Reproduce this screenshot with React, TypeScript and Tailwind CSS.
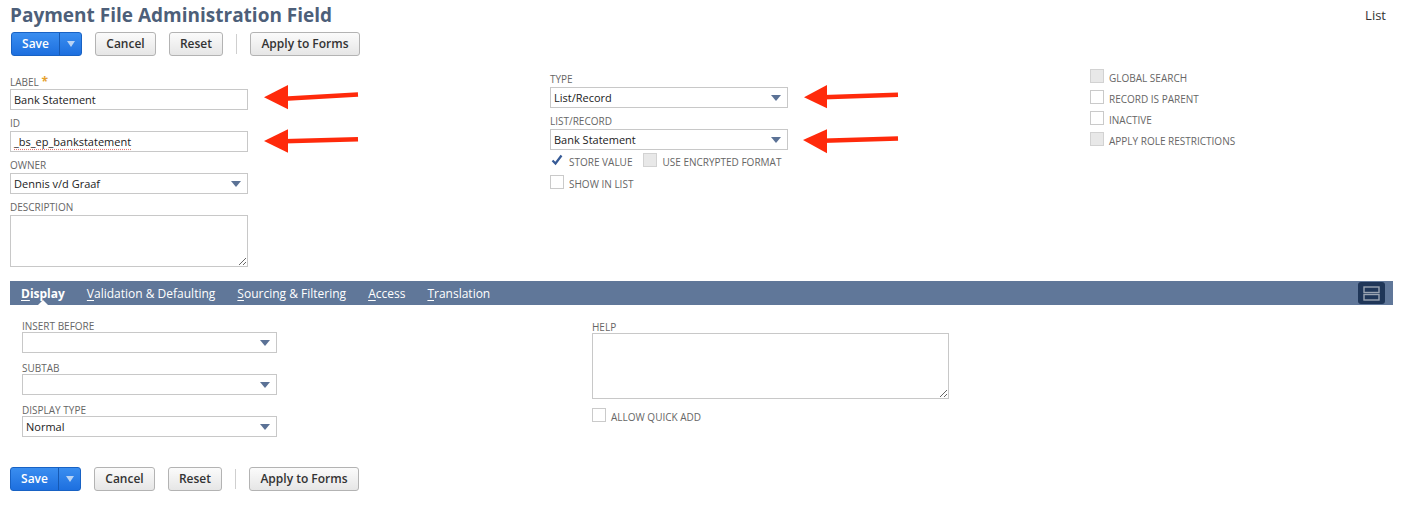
import React from "react";

function GrayButton({ children, w }: { children: React.ReactNode; w: string }) {
  return (
    <div
      className={`flex h-[24px] ${w} items-center justify-center rounded-[3px] border border-[#b3b3b3] bg-linear-to-b from-[#fbfbfb] to-[#e6e6e6] text-[12px] font-semibold text-[#333]`}
    >
      {children}
    </div>
  );
}

function SaveButton() {
  return (
    <div className="flex h-[24px] w-[71px] rounded-[3px] border border-[#1862c4] bg-linear-to-b from-[#3a8ef0] to-[#1d6fdf] text-white">
      <div className="flex w-[47px] items-center justify-center text-[12px] font-semibold">Save</div>
      <div className="w-px bg-[#1659b3]" />
      <div className="flex flex-1 items-center justify-center">
        <svg width="8" height="6" viewBox="0 0 8 6">
          <path d="M0 0H8L4 6Z" fill="#b9d3f4" />
        </svg>
      </div>
    </div>
  );
}

function ButtonBar({ className }: { className: string }) {
  return (
    <div className={`flex items-center gap-[13px] ${className}`}>
      <SaveButton />
      <GrayButton w="w-[61px]">Cancel</GrayButton>
      <GrayButton w="w-[54px]">Reset</GrayButton>
      <div className="h-[20px] w-px bg-[#cfcfcf]" />
      <GrayButton w="w-[110px]">Apply to Forms</GrayButton>
    </div>
  );
}

function SelectArrow() {
  return (
    <svg width="10" height="6" viewBox="0 0 10 6" className="shrink-0">
      <path d="M0 0H10L5 6Z" fill="#5b7296" />
    </svg>
  );
}

function FieldLabel({ children, h }: { children: React.ReactNode; h: string }) {
  return <div className={`${h} text-[10px] uppercase text-[#666]`}>{children}</div>;
}

function TextBox({ children, w }: { children?: React.ReactNode; w: string }) {
  return (
    <div className={`h-[21px] ${w} border border-[#c8c8c8] bg-white px-[3px] text-[11px] leading-[19px] text-[#222]`}>
      {children}
    </div>
  );
}

function SelectBox({ value, w }: { value?: string; w: string }) {
  return (
    <div
      className={`flex h-[21px] ${w} items-center justify-between border border-[#c8c8c8] bg-white pl-[3px] pr-[6px] text-[11px] leading-[19px] text-[#222]`}
    >
      <span>{value ?? ""}</span>
      <SelectArrow />
    </div>
  );
}

function Check({ label, kind }: { label: string; kind: "on" | "off" | "disabled" }) {
  return (
    <div className="flex items-end gap-[5px]">
      {kind === "on" ? (
        <svg width="14" height="14" viewBox="0 0 14 14" className="shrink-0">
          <path d="M2.5 7.5L5.5 10.5L11.5 2.5" fill="none" stroke="#365a96" strokeWidth="2.2" />
        </svg>
      ) : (
        <div
          className={`h-[14px] w-[14px] shrink-0 border ${
            kind === "disabled" ? "border-[#d2d2d2] bg-[#e8e8e8]" : "border-[#cacaca] bg-white"
          }`}
        />
      )}
      <span className="text-[10px] leading-[10px] uppercase text-[#666]">{label}</span>
    </div>
  );
}

function Tab({ first, rest, active }: { first: string; rest: string; active?: boolean }) {
  return (
    <div
      className={`relative h-[24px] px-[11px] pt-[2px] text-[12px] leading-[22px] text-white ${
        active ? "font-bold" : ""
      }`}
    >
      <u className="underline-offset-[2px]">{first}</u>
      {rest}
      {active && (
        <div className="absolute bottom-0 left-1/2 h-0 w-0 -translate-x-1/2 border-x-[5px] border-b-[5px] border-x-transparent border-b-white" />
      )}
    </div>
  );
}

function Arrows() {
  const red = "#ff2a0b";
  return (
    <svg
      className="pointer-events-none absolute left-0 top-0"
      width="1406"
      height="511"
      viewBox="0 0 1406 511"
    >
      <line x1="284" y1="98.8" x2="358" y2="94.5" stroke={red} strokeWidth="4.6" />
      <path d="M264 97.3L288 85L288 109.3Z" fill={red} />
      <line x1="284" y1="141.3" x2="358" y2="139.3" stroke={red} strokeWidth="4.6" />
      <path d="M264 141L288 129.3L288 152.7Z" fill={red} />
      <line x1="823" y1="97.2" x2="898" y2="94.7" stroke={red} strokeWidth="4.6" />
      <path d="M804 97.3L827 85L827 108.3Z" fill={red} />
      <line x1="823" y1="140.8" x2="898" y2="138.5" stroke={red} strokeWidth="4.6" />
      <path d="M803 140L827 129.3L827 153.3Z" fill={red} />
    </svg>
  );
}

export default function App() {
  return (
    <div className="relative h-[511px] w-[1406px] overflow-hidden bg-white font-['Open_Sans','Liberation_Sans',sans-serif]">
      {/* header */}
      <div className="flex justify-between pl-[10px] pr-[20px]">
        <h1 className="pt-[3px] text-[19px] font-bold leading-[24px] text-[#4d5f79]">
          Payment File Administration Field
        </h1>
        <div className="pt-[7px] text-[13px] leading-[16px] text-[#333]">List</div>
      </div>

      <ButtonBar className="mt-[5px] pl-[11px]" />

      {/* main fields */}
      <div className="mt-[18px] grid grid-cols-[540px_540px_1fr] pl-[10px]">
        <div className="flex flex-col">
          <FieldLabel h="h-[15px] leading-[15px]">
            Label <span className="text-[12px] font-bold text-[#e6a12e]">*</span>
          </FieldLabel>
          <TextBox w="w-[238px]">Bank Statement</TextBox>
          <div className="mt-[6px]">
            <FieldLabel h="h-[15px] leading-[15px]">ID</FieldLabel>
            <TextBox w="w-[238px]">
              <span className="underline decoration-[#e57a74] decoration-dotted underline-offset-[3px]">
                _bs_ep_bankstatement
              </span>
            </TextBox>
          </div>
          <div className="mt-[6px]">
            <FieldLabel h="h-[15px] leading-[15px]">Owner</FieldLabel>
            <SelectBox w="w-[238px]" value="Dennis v/d Graaf" />
          </div>
          <div className="mt-[6px]">
            <FieldLabel h="h-[15px] leading-[15px]">Description</FieldLabel>
            <textarea
              readOnly
              className="block h-[52px] w-[238px] border border-[#c8c8c8] bg-white outline-none"
            />
          </div>
        </div>

        <div className="-mt-[2px] flex flex-col">
          <FieldLabel h="h-[15px] leading-[15px]">Type</FieldLabel>
          <SelectBox w="w-[238px]" value="List/Record" />
          <div className="mt-[6px]">
            <FieldLabel h="h-[15px] leading-[15px]">List/Record</FieldLabel>
            <SelectBox w="w-[238px]" value="Bank Statement" />
          </div>
          <div className="mt-[3px] flex gap-[11px]">
            <Check label="Store value" kind="on" />
            <Check label="Use encrypted format" kind="disabled" />
          </div>
          <div className="mt-[8px]">
            <Check label="Show in list" kind="off" />
          </div>
        </div>

        <div className="-mt-[5px] flex flex-col gap-[7px]">
          <Check label="Global search" kind="disabled" />
          <Check label="Record is parent" kind="off" />
          <Check label="Inactive" kind="off" />
          <Check label="Apply role restrictions" kind="disabled" />
        </div>
      </div>

      {/* subtabs */}
      <div className="ml-[10px] mt-[14px] flex h-[24px] w-[1383px] justify-between bg-[#607799]">
        <div className="flex">
          <Tab first="D" rest="isplay" active />
          <Tab first="V" rest="alidation & Defaulting" />
          <Tab first="S" rest="ourcing & Filtering" />
          <Tab first="A" rest="ccess" />
          <Tab first="T" rest="ranslation" />
        </div>
        <div className="mr-[8px] mt-[1px] flex h-[22px] w-[27px] items-center justify-center rounded-[3px] bg-[#1f3658]">
          <svg width="17" height="15" viewBox="0 0 17 15">
            <rect x="1" y="1" width="15" height="5.5" fill="none" stroke="#9aa4b2" strokeWidth="1.4" />
            <rect x="1" y="8.5" width="15" height="5.5" fill="none" stroke="#9aa4b2" strokeWidth="1.4" />
          </svg>
        </div>
      </div>

      {/* display tab content */}
      <div className="mt-[15px] grid grid-cols-[570px_1fr] pl-[22px]">
        <div className="flex flex-col gap-[9px]">
          <div>
            <FieldLabel h="h-[12px] leading-[12px]">Insert before</FieldLabel>
            <SelectBox w="w-[255px]" />
          </div>
          <div>
            <FieldLabel h="h-[12px] leading-[12px]">Subtab</FieldLabel>
            <SelectBox w="w-[255px]" />
          </div>
          <div>
            <FieldLabel h="h-[12px] leading-[12px]">Display type</FieldLabel>
            <SelectBox w="w-[255px]" value="Normal" />
          </div>
        </div>
        <div className="mt-[1px] flex flex-col">
          <FieldLabel h="h-[12px] leading-[12px]">Help</FieldLabel>
          <textarea
            readOnly
            className="block h-[66px] w-[357px] border border-[#c8c8c8] bg-white outline-none"
          />
          <div className="mt-[9px]">
            <Check label="Allow quick add" kind="off" />
          </div>
        </div>
      </div>

      <ButtonBar className="mt-[30px] pl-[10px]" />

      <Arrows />
    </div>
  );
}
